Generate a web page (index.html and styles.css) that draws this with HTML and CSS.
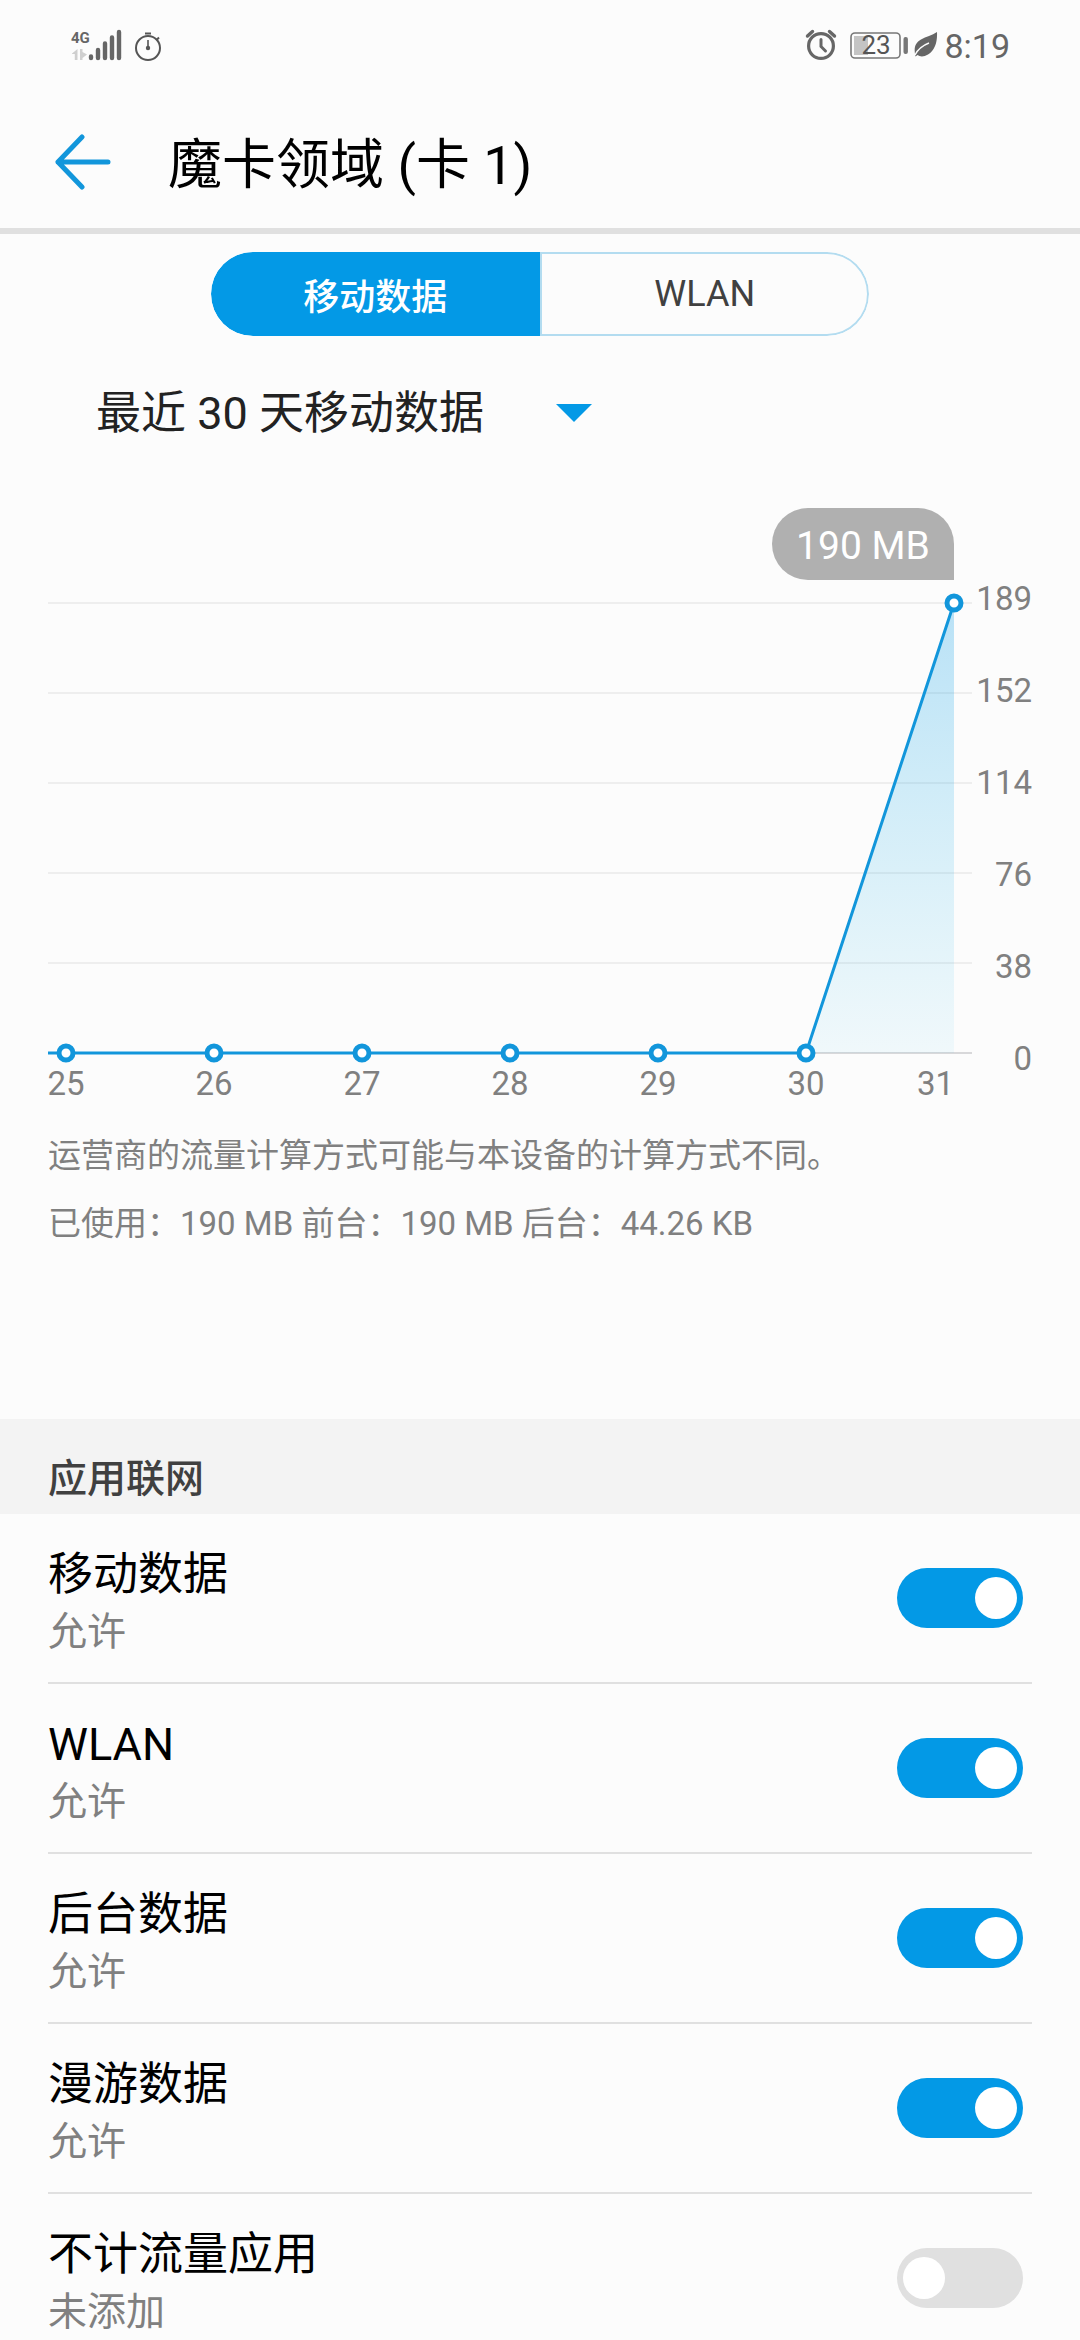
FILE: index.html
```
<!DOCTYPE html>
<html lang="zh-CN">
<head>
    <meta charset="UTF-8">
    <meta name="viewport" content="width=device-width, initial-scale=1.0">
    <title>魔卡领域 (卡 1)</title>
    <link rel="stylesheet" href="styles.css">
</head>
<body>

    <div class="status-bar">
        <div class="status-group">
            <svg class="icon-signal" viewBox="0 0 54 40" aria-label="4G">
                <text class="net-type" x="1" y="17">4G</text>
                <path d="M2 27.5 L7.5 23 V34 H4.8 V28 H2 Z M10 23 H12.5 V26 L17 28.5 L12.5 32 V34 H10 Z" fill="#cfcfcf"/>
                <path d="M21 30.5 V32 M28 24 V32 M35 17.5 V32 M42 11.5 V32 M49 6 V32" stroke="#666" stroke-width="4.4" stroke-linecap="round"/>
            </svg>
            <svg class="icon-timer" viewBox="0 0 28 40">
                <circle cx="14" cy="22" r="12" fill="none" stroke="#555" stroke-width="2"/>
                <path d="M11 7.5 H17 M22.5 14 L25 11.5" stroke="#555" stroke-width="2"/>
                <path d="M14 14 V22" stroke="#555" stroke-width="1.6"/>
                <circle cx="14" cy="22" r="2.2" fill="#555"/>
            </svg>
        </div>
        <div class="status-group status-right">
            <svg class="icon-alarm" viewBox="0 0 32 40">
                <circle cx="16" cy="20" r="12.4" fill="none" stroke="#666" stroke-width="3.2"/>
                <path d="M2.5 10 L7.5 5.5 M29.5 10 L24.5 5.5" stroke="#666" stroke-width="3.4" stroke-linecap="round"/>
                <path d="M16 13.5 V20.5 L20.5 25" fill="none" stroke="#666" stroke-width="3" stroke-linecap="round"/>
            </svg>
            <svg class="icon-battery" viewBox="0 0 58 40" aria-label="23">
                <rect x="1" y="7" width="49" height="25" rx="4" fill="none" stroke="#777" stroke-width="1.6"/>
                <rect x="4" y="10" width="14" height="19" fill="#c4c4c4"/>
                <rect x="53.5" y="11" width="4.4" height="17" rx="2" fill="#777"/>
                <text class="battery-level" x="26" y="28" text-anchor="middle">23</text>
            </svg>
            <svg class="icon-leaf" viewBox="0 0 24 40">
                <path d="M23 6 C23.500 16 21 24 14 28.500 C10 31 6 31 3.500 29 L1.500 30.500 C-0.500 22 1 17 7 13.500 C12 10.500 18 9.500 23 6 Z" fill="#666"/>
                <path d="M1 29 C4 23 8.500 19.500 15 17" fill="none" stroke="#fcfcfc" stroke-width="1.4"/>
            </svg>
            <span class="clock">8:19</span>
        </div>
    </div>

    <header class="title-bar">
        <button class="back-btn" aria-label="返回">
            <svg viewBox="0 0 56 56">
                <path d="M53 28 H3 M27 3 L3 28 L27 53" fill="none" stroke="#1296db" stroke-width="5" stroke-linecap="round" stroke-linejoin="round"/>
            </svg>
        </button>
        <h1>魔卡领域 (卡 1)</h1>
    </header>

    <main>
        <div class="tabs">
            <button class="tab active">移动数据</button>
            <button class="tab">WLAN</button>
        </div>

        <label class="period">
            <select class="period-select" aria-label="统计周期">
                <option>最近 30 天移动数据</option>
                <option>今日移动数据</option>
            </select>
            <svg class="period-arrow" viewBox="0 0 36 18"><path d="M0 0 H36 L18 18 Z" fill="#0399e6"/></svg>
        </label>

        <svg class="chart" viewBox="0 0 984 620">
            <defs>
                <linearGradient id="area" x1="0" y1="0" x2="0" y2="1">
                    <stop offset="0" stop-color="#0399e6" stop-opacity="0.27"/>
                    <stop offset="1" stop-color="#0bb0e6" stop-opacity="0.05"/>
                </linearGradient>
            </defs>

            <path class="grid-line" d="M0 103 H924 M0 193 H924 M0 283 H924 M0 373 H924 M0 463 H924"/>
            <path class="base-line" d="M0 553 H924"/>

            <path d="M758 553 L906 103 V553 Z" fill="url(#area)"/>
            <path class="data-line" d="M0 553 H758 L906 103"/>
            <g class="points">
                <circle cx="18" cy="553" r="7"/>
                <circle cx="166" cy="553" r="7"/>
                <circle cx="314" cy="553" r="7"/>
                <circle cx="462" cy="553" r="7"/>
                <circle cx="610" cy="553" r="7"/>
                <circle cx="758" cy="553" r="7"/>
                <circle cx="906" cy="103" r="7"/>
            </g>

            <path d="M760 8 H870 A36 36 0 0 1 906 44 V80 H760 A36 36 0 0 1 760 8 Z" fill="#b0b0b0"/>
            <text class="bubble-text" x="815" y="59" text-anchor="middle">190 MB</text>

            <g class="axis" text-anchor="end">
                <text x="984" y="110">189</text>
                <text x="984" y="202">152</text>
                <text x="984" y="294">114</text>
                <text x="984" y="386">76</text>
                <text x="984" y="478">38</text>
                <text x="984" y="570">0</text>
                <text x="906" y="595">31</text>
            </g>
            <g class="axis" text-anchor="middle">
                <text x="18" y="595">25</text>
                <text x="166" y="595">26</text>
                <text x="314" y="595">27</text>
                <text x="462" y="595">28</text>
                <text x="610" y="595">29</text>
                <text x="758" y="595">30</text>
            </g>
        </svg>

        <div class="notes">
            <p>运营商的流量计算方式可能与本设备的计算方式不同。</p>
            <p>已使用：190 MB 前台：190 MB 后台：44.26 KB</p>
        </div>

        <h2 class="section-title">应用联网</h2>

        <div class="settings">
            <label class="row">
                <span class="row-text">
                    <span class="row-title">移动数据</span>
                    <span class="row-sub">允许</span>
                </span>
                <input type="checkbox" class="switch" checked>
            </label>
            <label class="row">
                <span class="row-text">
                    <span class="row-title">WLAN</span>
                    <span class="row-sub">允许</span>
                </span>
                <input type="checkbox" class="switch" checked>
            </label>
            <label class="row">
                <span class="row-text">
                    <span class="row-title">后台数据</span>
                    <span class="row-sub">允许</span>
                </span>
                <input type="checkbox" class="switch" checked>
            </label>
            <label class="row">
                <span class="row-text">
                    <span class="row-title">漫游数据</span>
                    <span class="row-sub">允许</span>
                </span>
                <input type="checkbox" class="switch" checked>
            </label>
            <label class="row">
                <span class="row-text">
                    <span class="row-title">不计流量应用</span>
                    <span class="row-sub">未添加</span>
                </span>
                <input type="checkbox" class="switch">
            </label>
        </div>
    </main>

</body>
</html>
```
FILE: styles.css
```
* {
    box-sizing: border-box;
    margin: 0;
    padding: 0;
}

html {
    scrollbar-width: none;
}

body {
    background-color: #fcfcfc;
    color: #000;
    font-family: Roboto, "Noto Sans CJK SC", sans-serif;
}

button,
select {
    font-family: inherit;
    background: none;
    border: none;
    cursor: pointer;
}

svg {
    display: block;
}

/* --- Status bar --- */
.status-bar {
    display: flex;
    justify-content: space-between;
    padding: 26px 70px 30px 70px;
}

.status-group {
    display: flex;
    align-items: center;
    height: 40px;
    gap: 10px;
}

.status-group svg {
    height: 40px;
}

.status-right {
    gap: 6px;
}

.icon-signal {
    width: 54px;
}

.icon-timer {
    width: 28px;
}

.icon-alarm {
    width: 32px;
    margin-right: 7px;
}

.icon-battery {
    width: 58px;
}

.icon-leaf {
    width: 24px;
}

.net-type {
    font-size: 15px;
    font-weight: 700;
    fill: #666;
}

.battery-level {
    font-size: 26px;
    fill: #555;
}

.clock {
    font-size: 34px;
    line-height: 40px;
    color: #666;
}

/* --- Title bar --- */
.title-bar {
    display: flex;
    align-items: center;
    gap: 57px;
    height: 138px;
    padding: 0 55px;
    border-bottom: 6px solid #e0e0e0;
}

.back-btn svg {
    width: 56px;
    height: 56px;
}

.title-bar h1 {
    padding-top: 8px;
    font-size: 54px;
    font-weight: 400;
    line-height: 64px;
}

/* --- Tabs --- */
.tabs {
    display: flex;
    width: 61%;
    height: 84px;
    margin: 18px auto 0;
    border-radius: 42px;
    overflow: hidden;
}

.tab {
    flex: 1;
    font-size: 36px;
    color: #404040;
    border: 2px solid #b3dcf0;
    border-radius: 0 42px 42px 0;
}

.tab.active {
    background-color: #0399e6;
    border-color: #0399e6;
    border-radius: 42px 0 0 42px;
    color: white;
    font-weight: 500;
}

/* --- Period drop-down --- */
.period {
    display: flex;
    align-items: center;
    gap: 72px;
    margin: 47px 48px 57px 96px;
}

.period-select {
    appearance: none;
    height: 60px;
    font-size: 45px;
    color: #222;
}

.period-arrow {
    width: 36px;
    height: 18px;
}

/* --- Chart --- */
.chart {
    width: calc(100% - 96px);
    margin: 0 48px;
}

.grid-line {
    stroke: #eee;
    stroke-width: 2;
}

.base-line {
    stroke: #d8d8da;
    stroke-width: 2;
}

.data-line {
    fill: none;
    stroke: #1296db;
    stroke-width: 3;
}

.points circle {
    fill: white;
    stroke: #1296db;
    stroke-width: 5;
}

.bubble-text {
    font-size: 39px;
    fill: white;
}

.axis {
    font-size: 33px;
    fill: #808080;
}

.notes {
    margin: 0 48px;
    padding: 2px 0 161px;
    font-size: 33px;
    line-height: 68px;
    color: #808080;
}

/* --- Settings list --- */
.section-title {
    padding: 32px 48px 7px;
    background-color: #f3f3f3;
    color: #404040;
    font-size: 39px;
    font-weight: 500;
    line-height: 56px;
}

.row {
    display: flex;
    align-items: center;
    justify-content: space-between;
    height: 170px;
    margin: 0 48px;
    padding-right: 9px;
    border-bottom: 2px solid #e0e0e0;
    cursor: pointer;
}

.row-text {
    display: flex;
    flex-direction: column;
    padding-top: 8px;
}

.row-title {
    font-size: 45px;
    line-height: 60px;
}

.row-sub {
    font-size: 39px;
    line-height: 54px;
    color: #808080;
}

.switch {
    appearance: none;
    display: flex;
    align-items: center;
    width: 126px;
    height: 60px;
    padding: 0 6px;
    border-radius: 30px;
    background-color: #e0e0e0;
    cursor: pointer;
}

.switch::before {
    content: "";
    width: 42px;
    height: 42px;
    border-radius: 50%;
    background-color: white;
}

.switch:checked {
    justify-content: flex-end;
    background-color: #0399e6;
}
```
